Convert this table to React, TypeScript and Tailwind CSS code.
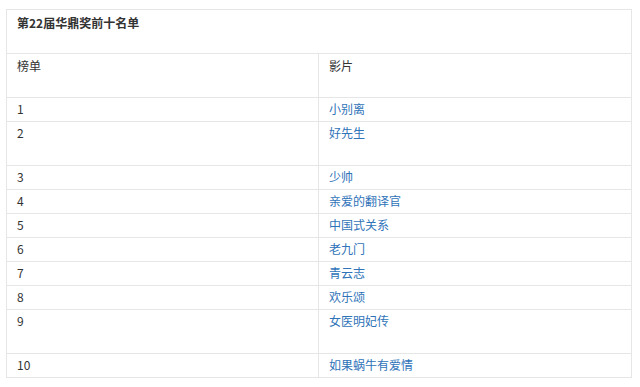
import React from "react";

const rows = [
  { rank: "1", name: "小别离" },
  { rank: "2", name: "好先生", tall: true },
  { rank: "3", name: "少帅" },
  { rank: "4", name: "亲爱的翻译官" },
  { rank: "5", name: "中国式关系" },
  { rank: "6", name: "老九门" },
  { rank: "7", name: "青云志" },
  { rank: "8", name: "欢乐颂" },
  { rank: "9", name: "女医明妃传", tall: true },
  { rank: "10", name: "如果蜗牛有爱情" },
];

export default function App() {
  return (
    <div
      className="w-[640px] h-[387px] bg-white pt-[9px] pl-[6px]"
      style={{ fontFamily: '"Noto Sans CJK SC", "Liberation Sans", sans-serif' }}
    >
      <table className="w-[626px] border-collapse text-[12px] leading-[16px] text-[#333]">
        <tbody>
          <tr className="h-[44px]">
            <td colSpan={2} className="border border-[#e6e6e6] px-[10px] pt-[5px] align-top font-bold">
              第22届华鼎奖前十名单
            </td>
          </tr>
          <tr className="h-[44px]">
            <td className="w-[312px] border border-[#e6e6e6] px-[10px] pt-[4px] align-top">榜单</td>
            <td className="border border-[#e6e6e6] px-[10px] pt-[4px] align-top">影片</td>
          </tr>
          {rows.map((r) => (
            <tr key={r.rank} className={r.tall ? "h-[44px]" : "h-[24px]"}>
              <td className="border border-[#e6e6e6] px-[10px] pt-[3px] align-top">{r.rank}</td>
              <td className="border border-[#e6e6e6] px-[10px] pt-[3px] align-top">
                <a className="text-[#2f73b9]">{r.name}</a>
              </td>
            </tr>
          ))}
        </tbody>
      </table>
    </div>
  );
}
